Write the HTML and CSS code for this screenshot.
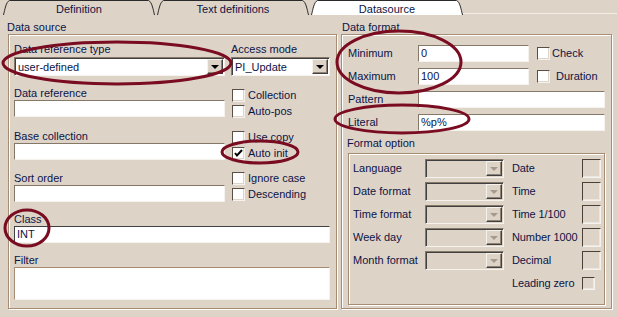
FILE: index.html
```html
<!DOCTYPE html>
<html>
<head>
<meta charset="utf-8">
<link rel="stylesheet" href="styles.css">
</head>
<body>
<div class="window">
  <div class="tabs">
    <div class="tab">
      <svg class="tab-shape" viewBox="0 0 152 15" preserveAspectRatio="none"><path d="M0.5 15 C2 9 3 2 6.5 0.5 L145.5 0.5 C149 2 150 9 151.5 15"/></svg>
      <span>Definition</span>
    </div>
    <div class="tab">
      <svg class="tab-shape" viewBox="0 0 152 15" preserveAspectRatio="none"><path d="M0.5 15 C2 9 3 2 6.5 0.5 L145.5 0.5 C149 2 150 9 151.5 15"/></svg>
      <span>Text definitions</span>
    </div>
    <div class="tab active">
      <svg class="tab-shape" viewBox="0 0 152 15" preserveAspectRatio="none"><path d="M0.5 15 C2 9 3 2 6.5 0.5 L145.5 0.5 C149 2 150 9 151.5 15"/></svg>
      <span>Datasource</span>
    </div>
    <div class="tab-rest"></div>
  </div>

  <div class="panel">
    <section class="group src">
      <div class="legend">Data source</div>
      <div class="frame src-grid">
        <div class="field first">
          <div class="lbl">Data reference type</div>
          <div class="combo"><span class="val">user-defined</span><span class="btn"><i class="arrow"></i></span></div>
        </div>
        <div class="field first">
          <div class="lbl">Access mode</div>
          <div class="combo"><span class="val">PI_Update</span><span class="btn"><i class="arrow"></i></span></div>
        </div>

        <div class="field">
          <div class="lbl">Data reference</div>
          <div class="input"></div>
        </div>
        <div class="checks c1">
          <div class="check"><span class="box"></span>Collection</div>
          <div class="check"><span class="box"></span>Auto-pos</div>
        </div>

        <div class="field">
          <div class="lbl">Base collection</div>
          <div class="input"></div>
        </div>
        <div class="checks c2">
          <div class="check"><span class="box"></span>Use copy</div>
          <div class="check ai"><span class="box on"><svg viewBox="0 0 11 11"><path d="M2 5 L4 7.5 L9 2"/></svg></span>Auto init</div>
        </div>

        <div class="field">
          <div class="lbl">Sort order</div>
          <div class="input"></div>
        </div>
        <div class="checks c3">
          <div class="check"><span class="box"></span>Ignore case</div>
          <div class="check"><span class="box"></span>Descending</div>
        </div>

        <div class="field wide">
          <div class="lbl">Class</div>
          <div class="input dark"><span class="val">INT</span></div>
        </div>
        <div class="field wide">
          <div class="lbl">Filter</div>
          <div class="input area"></div>
        </div>
      </div>
    </section>

    <section class="group fmt">
      <div class="legend">Data format</div>
      <div class="frame fmt-body">
        <div class="frow">
          <div class="flbl">Minimum</div>
          <div class="input short"><span class="val">0</span></div>
          <div class="check inline"><span class="box"></span>Check</div>
        </div>
        <div class="frow">
          <div class="flbl">Maximum</div>
          <div class="input short"><span class="val">100</span></div>
          <div class="check inline"><span class="box"></span><span class="dur">Duration</span></div>
        </div>
        <div class="frow">
          <div class="flbl">Pattern</div>
          <div class="input grow"></div>
        </div>
        <div class="frow">
          <div class="flbl">Literal</div>
          <div class="input grow"><span class="val">%p%</span></div>
        </div>
        <div class="sublegend">Format option</div>
        <div class="frame inner">
          <div class="ilbl">Language</div>
          <div class="combo off"><span class="btn"><i class="arrow"></i></span></div>
          <div class="ilbl r">Date</div>
          <div class="sq"></div>

          <div class="ilbl">Date format</div>
          <div class="combo off"><span class="btn"><i class="arrow"></i></span></div>
          <div class="ilbl r">Time</div>
          <div class="sq"></div>

          <div class="ilbl">Time format</div>
          <div class="combo off"><span class="btn"><i class="arrow"></i></span></div>
          <div class="ilbl r">Time 1/100</div>
          <div class="sq"></div>

          <div class="ilbl">Week day</div>
          <div class="combo off"><span class="btn"><i class="arrow"></i></span></div>
          <div class="ilbl r">Number 1000</div>
          <div class="sq"></div>

          <div class="ilbl">Month format</div>
          <div class="combo off"><span class="btn"><i class="arrow"></i></span></div>
          <div class="ilbl r">Decimal</div>
          <div class="sq"></div>

          <div class="ilbl r lz">Leading zero</div>
          <div class="sq small"></div>
        </div>
      </div>
    </section>
  </div>

  <svg class="marks" viewBox="0 0 617 317">
    <ellipse cx="117" cy="63" rx="114" ry="21"/>
    <ellipse cx="399" cy="62" rx="62" ry="31"/>
    <ellipse cx="402" cy="119" rx="67" ry="14"/>
    <ellipse cx="260" cy="152" rx="38" ry="11"/>
    <ellipse cx="27" cy="228" rx="22" ry="18"/>
  </svg>
</div>
</body>
</html>
```

FILE: styles.css
```css
* { box-sizing: border-box; }

body {
  margin: 0;
  background: #ded3c7;
  font-family: "Liberation Sans", Arial, sans-serif;
  font-size: 11px;
  color: #0c1446;
}

.window {
  position: relative;
  width: 617px;
  height: 317px;
  overflow: hidden;
  background: #ded3c7;
}

/* tabs */
.tabs {
  display: flex;
  height: 15px;
  padding-left: 3px;
}
.tab {
  position: relative;
  width: 152px;
  height: 15px;
  margin-right: 2px;
  text-align: center;
  line-height: 18px;
  color: #0c1446;
}
.tab span { position: relative; }
.tab-shape {
  position: absolute;
  left: 0;
  top: 0;
  width: 100%;
  height: 100%;
}
.tab-shape path {
  fill: #ded3c7;
  stroke: #2a2a2a;
  stroke-width: 1;
  vector-effect: non-scaling-stroke;
}
.tab.active .tab-shape path { fill: #ffffff; }
.tab-rest {
  flex: 1;
  height: 14px;
  border-bottom: 1px solid #f4eee8;
  margin-left: -2px;
}

/* panel */
.panel {
  display: flex;
  padding: 5px 0 0 8px;
  gap: 4px;
}
.group { display: flex; flex-direction: column; }
.group.src { width: 329px; }
.group.fmt { width: 271px; }
.legend {
  height: 14px;
  line-height: 14px;
}
.group.src .legend { margin-left: -1px; }
.group.fmt .legend { margin-left: 1px; }

.frame {
  border: 1px solid #a58c72;
  box-shadow: inset 1px 1px 0 #ffffff, 1px 1px 0 #ffffff;
}
.src-grid {
  height: 275px;
  display: grid;
  grid-template-columns: 211px 1fr;
  column-gap: 6px;
  row-gap: 10px;
  align-content: start;
  padding: 7px 6px 0 5px;
}
.field.first { margin-bottom: -0.5px; }
.field.wide { grid-column: 1 / span 2; }
.lbl {
  height: 14px;
  line-height: 14px;
}
.field.first .lbl { height: 15px; }

.input {
  height: 17px;
  background: #ffffff;
  border: 1px solid;
  border-color: #857868 #f6f2ee #f6f2ee #857868;
  line-height: 15px;
  padding-left: 2px;
  color: #0c1446;
}
.input.dark { border-color: #404040 #f6f2ee #f6f2ee #404040; }
.input.area {
  height: 33px;
  border-color: #a58c72 #f6f2ee #f6f2ee #a58c72;
}

.combo {
  position: relative;
  height: 19px;
  background: #ffffff;
  border: 1px solid;
  border-color: #857868 #f6f2ee #f6f2ee #857868;
  box-shadow: inset 1px 1px 0 #404040;
  display: flex;
  align-items: center;
  padding-left: 3px;
}
.combo .val { flex: 1; line-height: 16px; }
.combo .btn {
  position: absolute;
  right: 1px;
  top: 1px;
  width: 16px;
  height: 15px;
  background: #ded3c7;
  border: 1px solid;
  border-color: #f6f2ee #404040 #404040 #f6f2ee;
  box-shadow: inset -1px -1px 0 #8e8274;
  display: flex;
  align-items: center;
  justify-content: center;
}
.arrow {
  display: block;
  width: 0;
  height: 0;
  border-left: 4px solid transparent;
  border-right: 4px solid transparent;
  border-top: 4px solid #000000;
  margin-top: 1px;
}
.combo.off { background: #ded3c7; }
.combo.off .arrow { border-top-color: #a49a90; }

/* checkboxes */
.checks { display: flex; flex-direction: column; }
.checks.c1 { margin-top: 1.5px; }
.checks.c2 { margin-top: 0; }
.checks.c3 { margin-top: -1px; }
.check {
  display: flex;
  align-items: center;
  height: 16px;
  padding-left: 1px;
}
.check.ai { margin-top: 0; }
.box {
  width: 13px;
  height: 13px;
  margin-right: 3px;
  background: #ffffff;
  border: 1px solid;
  border-color: #5a4f45 #f6f2ee #f6f2ee #5a4f45;
  box-shadow: inset -1px -1px 0 #ddd4ca;
  display: flex;
  align-items: center;
  justify-content: center;
  flex: none;
}
.box svg { width: 11px; height: 11px; }
.box svg path { fill: none; stroke: #000; stroke-width: 2; }

/* format side */
.fmt-body {
  height: 275px;
  padding: 9.5px 6px 0 6px;
  display: flex;
  flex-direction: column;
}
.frow {
  display: flex;
  align-items: center;
  height: 17px;
  margin-bottom: 6px;
}
.flbl { width: 70px; }
.input.short { width: 111px; }
.input.grow { flex: 1; }
.check.inline { margin-left: 8px; padding-left: 0; }
.check.inline .box { margin-right: 2px; }
.dur { margin-left: 4px; }

.sublegend {
  height: 14px;
  line-height: 14px;
  margin-top: -1px;
  margin-left: -1px;
}
.frame.inner {
  margin-top: 3px;
  height: 152px;
  display: grid;
  grid-template-columns: 72px 79px 78px 19px;
  column-gap: 0;
  row-gap: 4px;
  grid-auto-rows: 19px;
  align-items: center;
  padding: 5px 0 0 4px;
}
.ilbl { white-space: nowrap; }
.ilbl.r { padding-left: 8px; letter-spacing: -0.1px; }
.ilbl.lz { grid-column: 3; }
.sq {
  width: 19px;
  height: 19px;
  border: 1px solid;
  border-color: #4a4038 #f6f2ee #f6f2ee #4a4038;
  box-shadow: inset -1px -1px 0 #ece6df;
}
.sq.small { width: 13px; height: 13px; }

/* annotations */
.marks {
  position: absolute;
  left: 0;
  top: 0;
  width: 617px;
  height: 317px;
  pointer-events: none;
}
.marks ellipse {
  fill: none;
  stroke: #7a0c22;
  stroke-width: 3;
}
```
